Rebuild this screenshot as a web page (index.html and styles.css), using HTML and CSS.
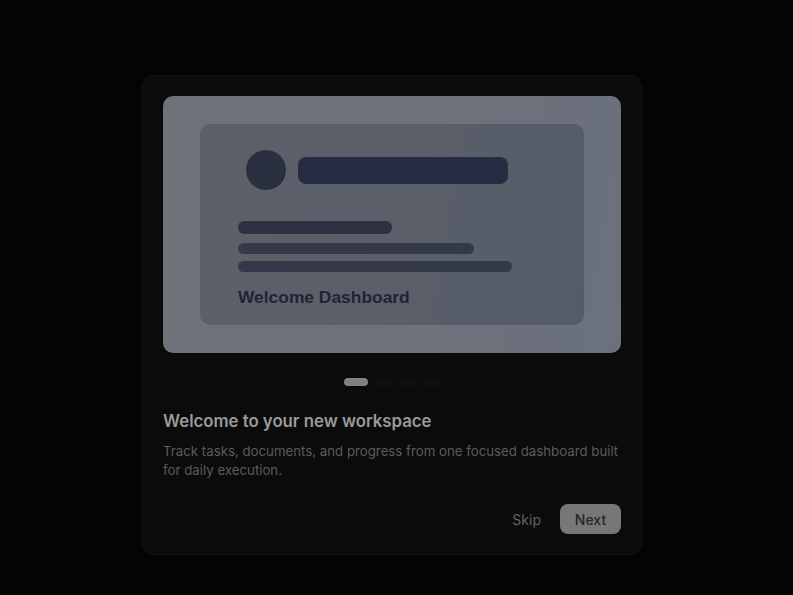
FILE: index.html
```html
<!DOCTYPE html>
<html lang="en">
<head>
<meta charset="utf-8">
<title>Welcome</title>
<link rel="stylesheet" href="styles.css">
</head>
<body>
<div class="card">
  <div class="hero">
    <div class="panel">
      <div class="panel-head">
        <div class="avatar"></div>
        <div class="head-bar"></div>
      </div>
      <div class="line line-1"></div>
      <div class="line line-2"></div>
      <div class="line line-3"></div>
      <div class="panel-title">Welcome Dashboard</div>
    </div>
  </div>
  <div class="dots">
    <span class="dot active"></span>
    <span class="dot"></span>
    <span class="dot"></span>
    <span class="dot"></span>
  </div>
  <h2 class="title">Welcome to your new workspace</h2>
  <p class="desc">Track tasks, documents, and progress from one focused dashboard built for daily execution.</p>
  <div class="actions">
    <button class="btn-skip">Skip</button>
    <button class="btn-next">Next</button>
  </div>
</div>
</body>
</html>
```

FILE: styles.css
```css
html, body {
  margin: 0;
  padding: 0;
  background: #040404;
  height: 100%;
}
body {
  padding: 75px 0 0 142px;
  box-sizing: border-box;
  font-family: Inter, "Liberation Sans", Arial, sans-serif;
}
.card {
  width: 500px;
  box-sizing: border-box;
  padding: 20px;
  background: #0b0b0c;
  border: 1px solid #141416;
  border-radius: 12px;
}
.hero {
  height: 257px;
  border-radius: 10px;
  background: linear-gradient(100deg, #6f7279 0%, #6c717b 60%, #6b717d 100%);
  padding: 28px 37px;
  box-sizing: border-box;
  display: flex;
}
.panel {
  flex: 1;
  border-radius: 10px;
  background: linear-gradient(100deg, #5c6069 0%, #5a5f69 50%, #555c69 100%);
  padding: 26px 38px 0 38px;
  box-sizing: border-box;
}
.panel-head {
  display: flex;
  align-items: center;
  gap: 12px;
  margin-left: 8px;
}
.avatar {
  width: 40px;
  height: 40px;
  border-radius: 50%;
  background: #2a2f3f;
}
.head-bar {
  width: 210px;
  height: 27px;
  border-radius: 8px;
  background: #262c41;
}
.line {
  border-radius: 6px;
}
.line-1 {
  width: 154px;
  height: 13px;
  margin-top: 31px;
  background: #2d3243;
}
.line-2 {
  width: 236px;
  height: 11px;
  margin-top: 9px;
  background: #353a4a;
}
.line-3 {
  width: 274px;
  height: 11px;
  margin-top: 7px;
  background: #343949;
}
.panel-title {
  margin-top: 15px;
  font-family: "Liberation Sans", Arial, sans-serif;
  font-weight: 700;
  font-size: 17.4px;
  line-height: 20px;
  color: #1f2336;
}
.dots {
  display: flex;
  justify-content: center;
  gap: 8px;
  margin-top: 25px;
  height: 8px;
}
.dot {
  width: 16px;
  height: 8px;
  border-radius: 4px;
  background: #0f0f10;
}
.dot.active {
  width: 24px;
  background: #808080;
}
.title {
  margin: 24px 0 0 0;
  font-size: 16.75px;
  line-height: 22px;
  font-weight: 600;
  color: #9a9a9a;
}
.desc {
  margin: 10px 0 0 0;
  font-size: 13.25px;
  line-height: 19px;
  color: #5c5c5c;
}
.actions {
  display: flex;
  justify-content: flex-end;
  align-items: center;
  gap: 7px;
  margin-top: 24px;
}
.actions button {
  font-family: inherit;
  font-size: 14px;
  height: 30px;
  border: none;
  border-radius: 8px;
  cursor: pointer;
}
.btn-skip {
  background: transparent;
  color: #636363;
  padding: 0 12px;
}
.btn-next {
  width: 61px;
  background: #777777;
  color: #262626;
  font-weight: 500;
}
```
